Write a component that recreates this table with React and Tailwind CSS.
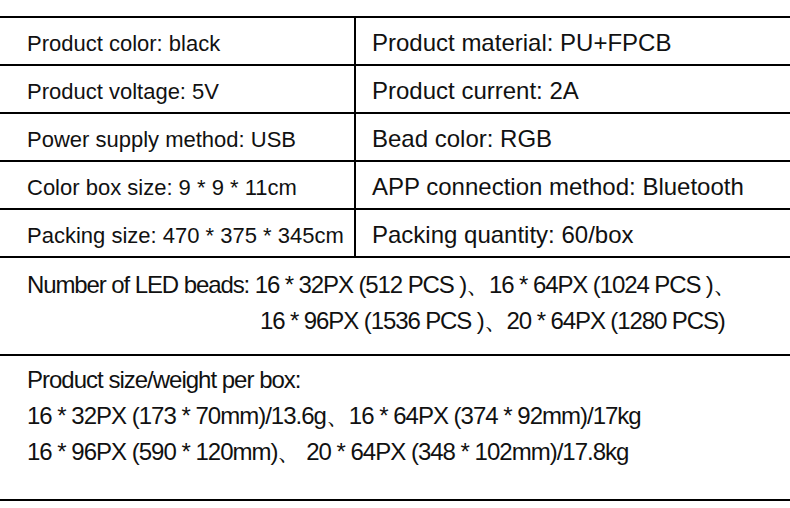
import React from 'react';

const rows = [
  ['Product color: black', 'Product material: PU+FPCB'],
  ['Product voltage: 5V', 'Product current: 2A'],
  ['Power supply method: USB', 'Bead color: RGB'],
  ['Color box size: 9 * 9 * 11cm', 'APP connection method: Bluetooth'],
  ['Packing size: 470 * 375 * 345cm', 'Packing quantity: 60/box'],
];

const App = () => {
  return (
    <div className="w-[790px] h-[508px] bg-white text-[#111] pt-4" style={{ fontFamily: '"Liberation Sans", Arial, sans-serif' }}>
      <div className="border-t-2 border-black">
        {rows.map((row, idx) => (
          <div key={idx} className="flex h-[48px] border-b-2 border-black">
            <div className="w-[356px] border-r-2 border-black flex items-center pt-[4px] pl-[27px] text-[22px]">{row[0]}</div>
            <div className="flex-1 flex items-center pt-[4px] pl-[16px] text-[24px]">{row[1]}</div>
          </div>
        ))}
        <div className="h-[98px] border-b-2 border-black pt-[9px] pl-[27px] text-[24px] tracking-[-1.1px] leading-[36px]">
          <p>Number of LED beads: 16 * 32PX (512 PCS )、16 * 64PX (1024 PCS )、</p>
          <p className="pl-[233px]">16 * 96PX (1536 PCS )、20 * 64PX (1280 PCS)</p>
        </div>
        <div className="h-[145px] border-b-2 border-black pt-[6px] pl-[27px] text-[24px] tracking-[-1px] leading-[36px]">
          <p>Product size/weight per box:</p>
          <p>16 * 32PX (173 * 70mm)/13.6g、16 * 64PX (374 * 92mm)/17kg</p>
          <p>16 * 96PX (590 * 120mm)、 20 * 64PX (348 * 102mm)/17.8kg</p>
        </div>
      </div>
    </div>
  );
};

export default App;
